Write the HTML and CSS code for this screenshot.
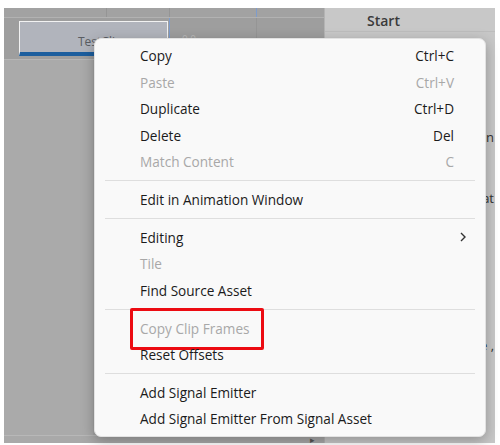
FILE: index.html
```html
<!DOCTYPE html>
<html lang="en">
<head>
    <meta charset="UTF-8">
    <meta name="viewport" content="width=device-width, initial-scale=1.0">
    <title>Timeline Clip Menu</title>
    <link rel="stylesheet" href="styles.css">
</head>
<body>
    <div class="editor">
        <div class="timeline">
            <div class="ruler">
                <span></span><span></span><span class="playhead"></span><span></span>
            </div>
            <div class="track">
                <div class="clip">
                    <span class="clip-name">TestClip</span>
                </div>
                <span class="clip-time">0.0</span>
            </div>
            <div class="tracks-body">
                <div class="track-list"></div>
                <div class="track-area"></div>
            </div>
            <div class="scrollbar">
                <span class="scroll-thumb"></span>
                <span class="scroll-arrow">&#9656;</span>
            </div>
        </div>

        <div class="inspector">
            <div class="inspector-title">Start</div>
            <div class="field field-ease">n</div>
            <div class="field field-repeat">at</div>
            <div class="field field-scale">e ,</div>
        </div>
    </div>

    <div class="context-menu">
        <div class="menu-item"><span>Copy</span><span class="shortcut">Ctrl+C</span></div>
        <div class="menu-item disabled"><span>Paste</span><span class="shortcut">Ctrl+V</span></div>
        <div class="menu-item"><span>Duplicate</span><span class="shortcut">Ctrl+D</span></div>
        <div class="menu-item"><span>Delete</span><span class="shortcut">Del</span></div>
        <div class="menu-item disabled"><span>Match Content</span><span class="shortcut">C</span></div>
        <div class="separator"></div>
        <div class="menu-item"><span>Edit in Animation Window</span></div>
        <div class="separator"></div>
        <div class="menu-item">
            <span>Editing</span>
            <span class="shortcut"></span>
            <svg class="submenu-arrow" width="6" height="10" viewBox="0 0 6 10">
                <path d="M1 1 L5 5 L1 9" fill="none" stroke="#333" stroke-width="1.4"/>
            </svg>
        </div>
        <div class="menu-item disabled"><span>Tile</span></div>
        <div class="menu-item"><span>Find Source Asset</span></div>
        <div class="separator"></div>
        <div class="menu-item disabled annotated">
            <span>Copy Clip Frames</span>
            <span class="annotation"></span>
        </div>
        <div class="menu-item"><span>Reset Offsets</span></div>
        <div class="separator"></div>
        <div class="menu-item"><span>Add Signal Emitter</span></div>
        <div class="menu-item"><span>Add Signal Emitter From Signal Asset</span></div>
    </div>
</body>
</html>
```

FILE: styles.css
```css
* {
    margin: 0;
    padding: 0;
    box-sizing: border-box;
}

body {
    font-family: 'Open Sans', 'Noto Sans', sans-serif;
    background: white;
    width: 500px;
    height: 445px;
    overflow: hidden;
    position: relative;
}

.editor {
    display: flex;
    margin: 8px 0 0 4px;
    width: 491px;
    height: 435px;
}

/* timeline side */

.timeline {
    width: 321px;
    display: flex;
    flex-direction: column;
    background: #a8a8a8;
    border-right: 1px solid #b4b4b4;
}

.ruler {
    height: 10px;
    display: grid;
    grid-template-columns: 103px 63px 87px 1fr;
    background: #a2a2a2;
    border-bottom: 1px solid #b2b2b2;
}

.ruler span {
    border-right: 1px solid #959595;
}

.ruler span:last-child {
    border-right: none;
}

.ruler .playhead {
    border-right-color: #7d9ccc;
}

.track {
    height: 42px;
    display: flex;
    align-items: flex-start;
    background: linear-gradient(to right, transparent 165px, #7d9ccc 165px, #7d9ccc 166px, transparent 166px, transparent 252px, #959595 252px, #959595 253px, transparent 253px), #9e9e9e;
    border-bottom: 1px solid #b6b6b6;
}

.clip {
    margin: 3px 0 0 15px;
    width: 149px;
    height: 35px;
    background: #b1b4bc;
    border: 1px solid #f2f2f2;
    border-bottom: 4px solid #1c5e9e;
    display: flex;
    align-items: center;
    padding-left: 58px;
}

.clip-name {
    font-size: 12px;
    color: #5a5d63;
    margin-top: 8px;
}

.clip-time {
    margin: 14px 0 0 14px;
    font-size: 10px;
    color: #b9b9b9;
}

.tracks-body {
    flex: 1;
    display: flex;
}

.track-list {
    width: 89px;
    background: #aaaaaa;
}

.track-area {
    flex: 1;
    background: #a4a4a4;
}

.scrollbar {
    height: 8px;
    display: flex;
    align-items: center;
    background: #a9a9a9;
    border-top: 1px solid #b8b8b8;
}

.scroll-thumb {
    width: 282px;
}

.scroll-arrow {
    font-size: 9px;
    line-height: 8px;
    color: #555;
    margin-left: 24px;
}

/* inspector side */

.inspector {
    flex: 1;
    background: #c8c8c8;
    display: flex;
    flex-direction: column;
    overflow: hidden;
    color: #333;
}

.inspector-title {
    height: 24px;
    padding: 3px 0 0 42px;
    font-size: 14px;
    font-weight: 600;
    color: #3a3a3a;
    border-bottom: 1px solid #bdbdbd;
}

.field {
    font-size: 13px;
    text-align: right;
    white-space: nowrap;
    padding-right: 1px;
}

.field-ease {
    margin-top: 96px;
}

.field-repeat {
    margin-top: 43px;
}

.field-scale {
    margin-top: 129px;
}

/* context menu */

.context-menu {
    position: absolute;
    left: 94px;
    top: 38px;
    width: 392px;
    padding: 3.5px 0;
    background: #f9f9f9;
    border: 1px solid #e2e2e2;
    border-radius: 7px;
    box-shadow: 0 4px 14px rgba(0, 0, 0, 0.28);
    display: flex;
    flex-direction: column;
}

.menu-item {
    height: 26.5px;
    display: grid;
    grid-template-columns: 1fr auto 22px;
    align-items: center;
    padding: 0 9px 0 45px;
    font-size: 13.6px;
    color: #1b1b1b;
    position: relative;
}

.menu-item.disabled {
    color: #a8a8a8;
}

.shortcut {
    text-align: right;
}

.submenu-arrow {
    margin-left: 6px;
}

.separator {
    height: 1px;
    margin: 5px 10px 5.25px;
    background: #dedede;
}

.annotation {
    position: absolute;
    left: 35px;
    top: -7px;
    width: 134px;
    height: 42px;
    border: 3px solid #ec0b12;
    border-radius: 2px;
}
```
